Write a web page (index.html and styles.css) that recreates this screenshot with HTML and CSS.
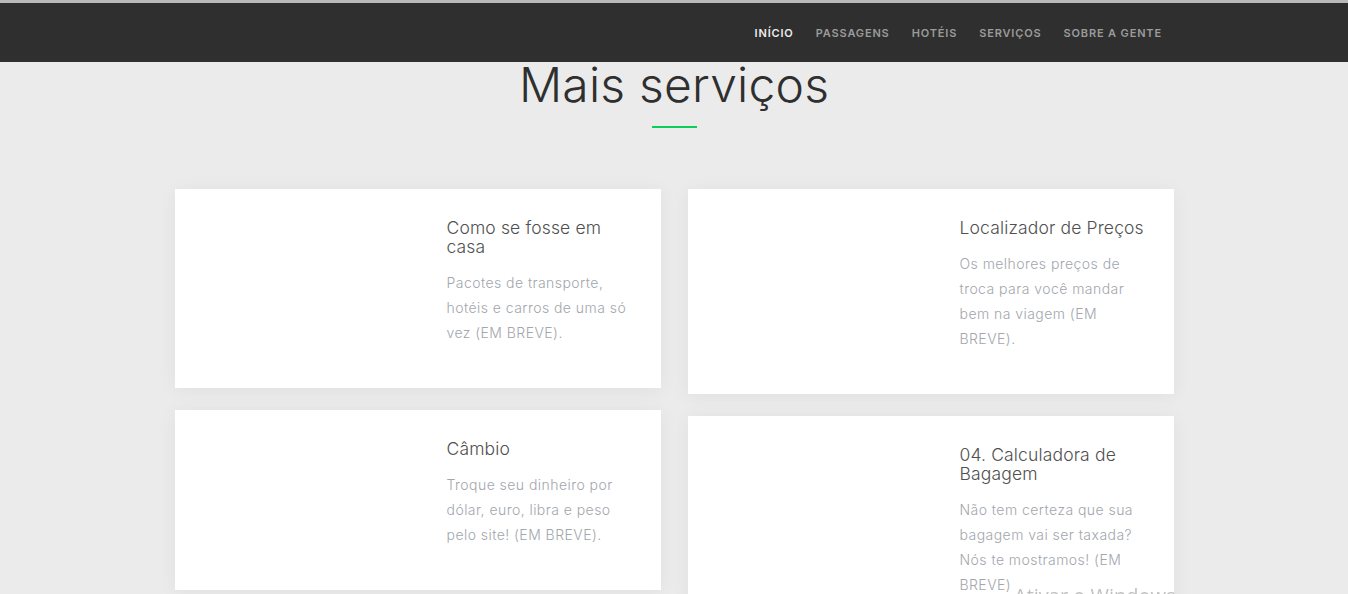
FILE: index.html
```html
<!DOCTYPE html>
<html lang="pt-BR">
<head>
<meta charset="utf-8">
<title>Mais serviços</title>
<link rel="stylesheet" href="styles.css">
</head>
<body>
<div class="top-strip"></div>
<header class="navbar">
  <nav class="menu">
    <a class="menu-item active" href="#">INÍCIO</a>
    <a class="menu-item" href="#">PASSAGENS</a>
    <a class="menu-item" href="#">HOTÉIS</a>
    <a class="menu-item" href="#">SERVIÇOS</a>
    <a class="menu-item" href="#">SOBRE A GENTE</a>
  </nav>
</header>
<main class="services">
  <h1 class="section-title">Mais serviços</h1>
  <div class="divider"></div>
  <div class="grid">
    <div class="col">
      <article class="card">
        <div class="card-media"></div>
        <div class="card-body">
          <h3 class="card-title">Como se fosse em casa</h3>
          <p class="card-text">Pacotes de transporte, hotéis e carros de uma só vez (EM BREVE).</p>
        </div>
      </article>
      <article class="card">
        <div class="card-media"></div>
        <div class="card-body">
          <h3 class="card-title">Câmbio</h3>
          <p class="card-text">Troque seu dinheiro por dólar, euro, libra e peso pelo site! (EM BREVE).</p>
        </div>
      </article>
    </div>
    <div class="col">
      <article class="card">
        <div class="card-media"></div>
        <div class="card-body">
          <h3 class="card-title">Localizador de Preços</h3>
          <p class="card-text">Os melhores preços de troca para você mandar bem na viagem (EM BREVE).</p>
        </div>
      </article>
      <article class="card">
        <div class="card-media"></div>
        <div class="card-body">
          <h3 class="card-title">04. Calculadora de Bagagem</h3>
          <p class="card-text">Não tem certeza que sua bagagem vai ser taxada? Nós te mostramos! (EM BREVE)</p>
        </div>
      </article>
    </div>
  </div>
</main>
<div class="watermark">Ativar o Windows</div>
</body>
</html>
```

FILE: styles.css
```css
* { box-sizing: border-box; }
html, body { margin: 0; padding: 0; }
body {
  background: #ebebeb;
  font-family: "Inter", "Open Sans", sans-serif;
  overflow: hidden;
  height: 594px;
}
.top-strip { height: 3px; background: #b9b9b9; }
.navbar {
  height: 59px;
  background: #2f2f2f;
  display: flex;
  justify-content: flex-end;
  align-items: center;
  padding-right: 186px;
}
.menu { display: flex; gap: 22px; }
.menu-item {
  font-family: "Inter", sans-serif;
  font-size: 11px;
  font-weight: 600;
  letter-spacing: 0.85px;
  color: #9b9b9b;
  text-decoration: none;
  line-height: 14px;
  padding-top: 1px;
}
.menu-item.active { color: #ececec; }
.services { display: flex; flex-direction: column; align-items: center; }
.section-title {
  margin: 0;
  font-family: "Inter", sans-serif;
  font-weight: 300;
  font-size: 48px;
  line-height: 46px;
  color: #2f2f2f;
  letter-spacing: 0.2px;
}
.divider {
  width: 45px;
  height: 2px;
  background: #0ccf58;
  margin-top: 18px;
}
.grid {
  margin-top: 61px;
  display: grid;
  grid-template-columns: 486px 486px;
  gap: 27px;
}
.col { display: flex; flex-direction: column; gap: 22px; }
.card {
  background: #fff;
  box-shadow: 0 2px 18px rgba(0, 0, 0, 0.05);
  display: grid;
  grid-template-columns: 1fr 188px;
  padding: 29px 26px 43px 0;
}
.card-title {
  margin: 0 0 14px;
  font-size: 17.5px;
  font-weight: 300;
  line-height: 19px;
  letter-spacing: 0.15px;
  color: #505050;
}
.card-text {
  margin: 0;
  font-size: 14px;
  font-weight: 300;
  line-height: 25px;
  letter-spacing: 0.45px;
  color: #a2a6ad;
}
.watermark {
  position: fixed;
  left: 1014px;
  top: 582px;
  font-family: "Open Sans", sans-serif;
  font-size: 20px;
  color: rgba(140, 140, 140, 0.55);
  white-space: nowrap;
}
```
